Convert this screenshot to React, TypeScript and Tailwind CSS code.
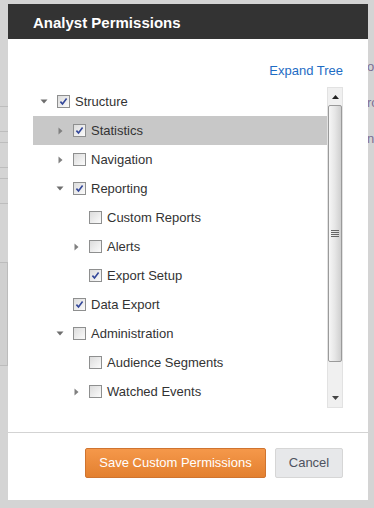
import React from "react";

type Node = { label: string; depth: number; arrow?: "right" | "down"; checked: boolean; selected?: boolean };

const nodes: Node[] = [
  { label: "Structure", depth: 0, arrow: "down", checked: true },
  { label: "Statistics", depth: 1, arrow: "right", checked: true, selected: true },
  { label: "Navigation", depth: 1, arrow: "right", checked: false },
  { label: "Reporting", depth: 1, arrow: "down", checked: true },
  { label: "Custom Reports", depth: 2, checked: false },
  { label: "Alerts", depth: 2, arrow: "right", checked: false },
  { label: "Export Setup", depth: 2, checked: true },
  { label: "Data Export", depth: 1, checked: true },
  { label: "Administration", depth: 1, arrow: "down", checked: false },
  { label: "Audience Segments", depth: 2, checked: false },
  { label: "Watched Events", depth: 2, arrow: "right", checked: false },
];

function Arrow({ dir }: { dir?: "right" | "down" }) {
  return (
    <div className="w-[12px] h-[12px] flex items-center justify-center shrink-0">
      {dir === "right" && (
        <svg width="5" height="8" viewBox="0 0 5 8">
          <path d="M0.5 0.5 L4.5 4 L0.5 7.5 Z" fill="#808080" />
        </svg>
      )}
      {dir === "down" && (
        <svg width="8" height="5" viewBox="0 0 8 5">
          <path d="M0.5 0.5 L7.5 0.5 L4 4.5 Z" fill="#6e6e6e" />
        </svg>
      )}
    </div>
  );
}

function Check({ checked }: { checked: boolean }) {
  return (
    <div className="w-[13px] h-[13px] border border-[#8e8f8f] bg-gradient-to-br from-[#dcdcdc] to-[#fbfbfb] flex items-center justify-center shrink-0">
      {checked && (
        <svg width="11" height="11" viewBox="0 0 11 11">
          <path d="M2.4 5.6 L4.5 7.9 L8.6 2.6" fill="none" stroke="#34489a" strokeWidth="1.6" />
        </svg>
      )}
    </div>
  );
}

export default function App() {
  return (
    <div
      className="relative w-[374px] h-[508px] bg-[#d4d4d4] overflow-hidden"
      style={{ fontFamily: '"Liberation Sans", Arial, sans-serif' }}
    >
      {/* background page (dimmed) */}
      <div className="absolute left-0 top-0 w-[8px] h-full flex flex-col">
        <div className="h-[106px]" />
        <div className="h-px bg-[#bdbdbd]" />
        <div className="h-[24px]" />
        <div className="h-px bg-[#bdbdbd]" />
        <div className="h-[10px]" />
        <div className="h-px bg-[#bdbdbd]" />
        <div className="h-[24px]" />
        <div className="h-px bg-[#bdbdbd]" />
        <div className="h-[10px]" />
        <div className="h-px bg-[#bdbdbd]" />
        <div className="h-[24px]" />
        <div className="h-px bg-[#bdbdbd]" />
        <div className="h-[58px]" />
        <div className="h-[104px] border-y border-r border-[#bcbcbc] bg-[#d0d0d0]" />
      </div>
      <div className="absolute left-[367px] top-[59px] flex flex-col gap-[20px] text-[13px] text-[#7b6f95] leading-[16px]">
        <span>or</span>
        <span>ro</span>
        <span>n</span>
      </div>

      {/* modal */}
      <div className="absolute left-[8px] top-[4px] w-[360px] h-[496px] bg-white flex flex-col">
        <div className="h-[35px] bg-[#333333] flex items-center pl-[25px]">
          <span className="text-white font-bold text-[15px] leading-none pt-px">Analyst Permissions</span>
        </div>
        <div className="flex flex-col px-[25px] pt-[24px]">
          <div className="flex justify-end text-[13px] leading-[15px] text-[#1e6cc4] pr-0">Expand Tree</div>
          <div className="mt-[9px] flex h-[321px]">
            <div className="flex-1 flex flex-col">
              {nodes.map((n) => (
                <div
                  key={n.label}
                  className={`h-[29px] shrink-0 flex items-center ${n.selected ? "bg-[#c8c8c8]" : ""}`}
                  style={{ paddingLeft: 5 + n.depth * 16 }}
                >
                  <Arrow dir={n.arrow} />
                  <div className="w-[7px]" />
                  <Check checked={n.checked} />
                  <span className="ml-[5px] text-[13px] text-[#333333] leading-none">{n.label}</span>
                </div>
              ))}
            </div>
            {/* scrollbar */}
            <div className="w-[16px] flex flex-col bg-[#f0f0f0] border border-[#e2e2e2]">
              <div className="h-[17px] flex items-center justify-center">
                <svg width="7" height="4" viewBox="0 0 7 4">
                  <path d="M0 4 L3.5 0 L7 4 Z" fill="#222" />
                </svg>
              </div>
              <div className="h-[257px] mx-0 border border-[#9a9a9a] rounded-[2px] bg-gradient-to-r from-[#f6f6f6] via-[#e6e6e6] to-[#cfcfcf] flex items-center justify-center">
                <div className="flex flex-col gap-[1px]">
                  <div className="w-[8px] h-px bg-[#666]" />
                  <div className="w-[8px] h-px bg-[#666]" />
                  <div className="w-[8px] h-px bg-[#666]" />
                  <div className="w-[8px] h-px bg-[#666]" />
                </div>
              </div>
              <div className="flex-1 flex items-end justify-center pb-[7px]">
                <svg width="7" height="4" viewBox="0 0 7 4">
                  <path d="M0 0 L7 0 L3.5 4 Z" fill="#444" />
                </svg>
              </div>
            </div>
          </div>
        </div>
        <div className="mt-auto h-[68px] border-t border-[#d3d3d3] flex items-start justify-end pr-[25px] pt-[15px] gap-[9px]">
          <button className="h-[30px] w-[181px] rounded-[2px] border border-[#cf7430] bg-gradient-to-b from-[#f5984a] to-[#e3802f] text-white text-[13px]">
            Save Custom Permissions
          </button>
          <button className="h-[30px] w-[68px] rounded-[2px] border border-[#d6d6d6] bg-[#e7e8ea] text-[#4f5360] text-[13px]">
            Cancel
          </button>
        </div>
      </div>
    </div>
  );
}
